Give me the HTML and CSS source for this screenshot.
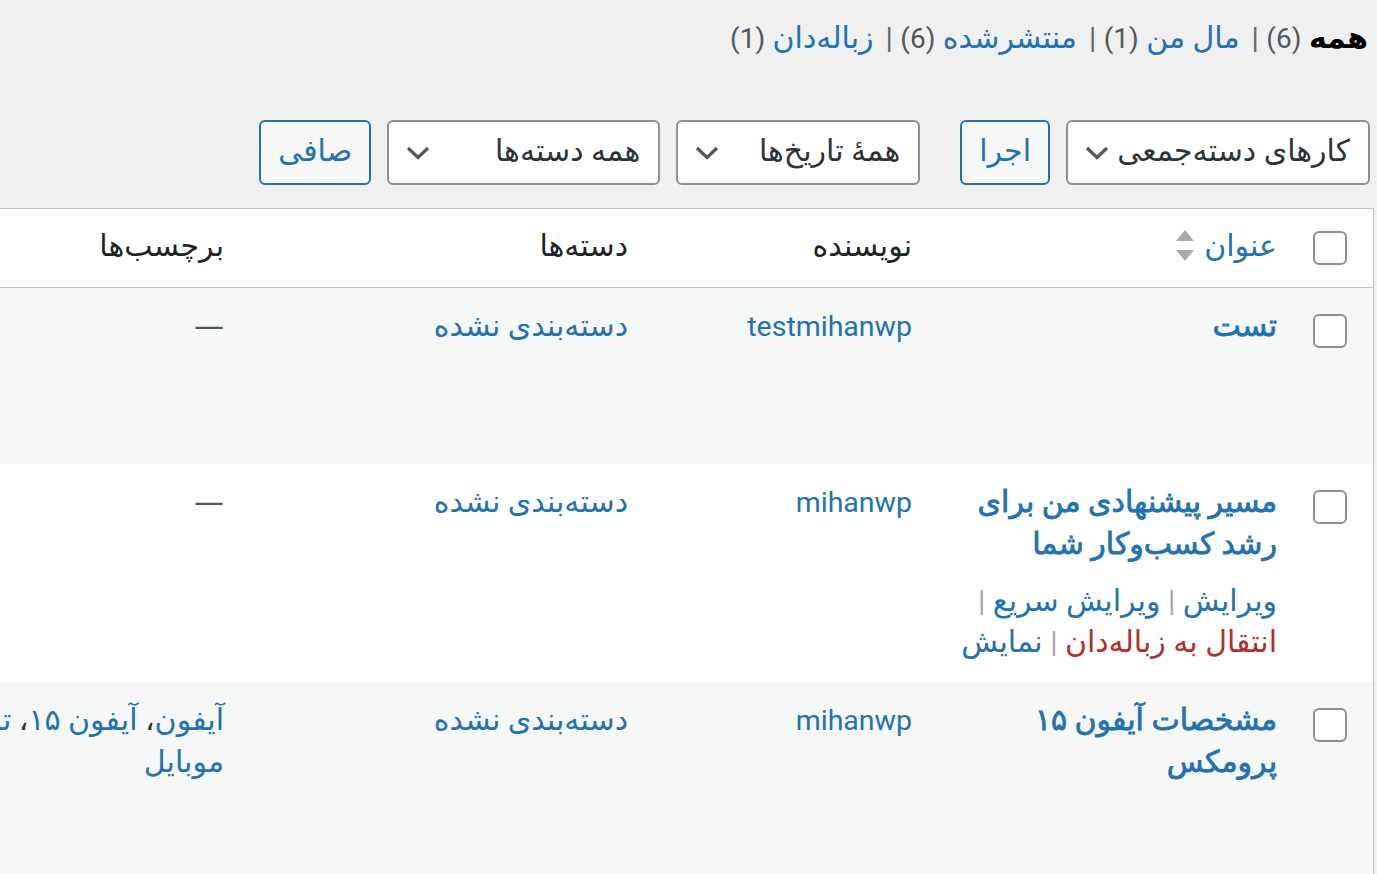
FILE: index.html
```html
<!DOCTYPE html>
<html lang="fa" dir="rtl">
<head>
    <meta charset="UTF-8">
    <meta name="viewport" content="width=device-width, initial-scale=1.0">
    <title>نوشته‌ها</title>
    <link rel="stylesheet" href="styles.css">
</head>
<body>
    <div class="wrap">
        <ul class="subsubsub">
            <li><a class="current">همه <span class="count">(6)</span></a> |</li>
            <li><a>مال من <span class="count">(1)</span></a> |</li>
            <li><a>منتشرشده <span class="count">(6)</span></a> |</li>
            <li><a>زباله&zwnj;دان <span class="count">(1)</span></a></li>
        </ul>

        <div class="tablenav">
            <div class="actions">
                <div class="select bulk">
                    <span>کارهای دسته&zwnj;جمعی</span>
                    <svg width="24" height="14" viewBox="0 0 24 14"><polyline points="2,2 12,11.5 22,2" fill="none" stroke="#50575e" stroke-width="3.2"/></svg>
                </div>
                <button class="button">اجرا</button>
            </div>
            <div class="actions">
                <div class="select dates">
                    <span>همهٔ تاریخ&zwnj;ها</span>
                    <svg width="24" height="14" viewBox="0 0 24 14"><polyline points="2,2 12,11.5 22,2" fill="none" stroke="#50575e" stroke-width="3.2"/></svg>
                </div>
                <div class="select cats">
                    <span>همه دسته&zwnj;ها</span>
                    <svg width="24" height="14" viewBox="0 0 24 14"><polyline points="2,2 12,11.5 22,2" fill="none" stroke="#50575e" stroke-width="3.2"/></svg>
                </div>
                <button class="button">صافی</button>
            </div>
        </div>

        <div class="table-clip">
            <table class="posts">
                <colgroup>
                    <col class="col-check">
                    <col class="col-title">
                    <col class="col-author">
                    <col class="col-cats">
                    <col class="col-tags">
                    <col class="col-comments">
                    <col class="col-date">
                </colgroup>
                <thead>
                    <tr>
                        <th class="check-column"><input type="checkbox"></th>
                        <th><a class="sort">عنوان <svg class="sorting" width="18" height="32" viewBox="0 0 18 32"><polygon points="9,0 18,11 0,11" fill="#a7aaad"/><polygon points="0,20 18,20 9,31" fill="#a7aaad"/></svg></a></th>
                        <th>نویسنده</th>
                        <th>دسته&zwnj;ها</th>
                        <th>برچسب&zwnj;ها</th>
                        <th>دیدگاه</th>
                        <th>تاریخ</th>
                    </tr>
                </thead>
                <tbody>
                    <tr class="alt">
                        <td class="check-column"><input type="checkbox"></td>
                        <td>
                            <a class="row-title">تست</a>
                            <div class="row-actions">
                                <span><a>ویرایش</a> |</span>
                                <span><a>ویرایش سریع</a> |</span>
                                <span><a class="trash">انتقال به زباله&zwnj;دان</a> |</span>
                                <span><a>نمایش</a></span>
                            </div>
                        </td>
                        <td><a class="latin">testmihanwp</a></td>
                        <td><a>دسته&zwnj;بندی نشده</a></td>
                        <td><span class="dash">—</span></td>
                        <td>—</td>
                        <td>منتشرشده</td>
                    </tr>
                    <tr class="hover">
                        <td class="check-column"><input type="checkbox"></td>
                        <td>
                            <a class="row-title">مسیر پیشنهادی من برای رشد کسب&zwnj;وکار شما</a>
                            <div class="row-actions">
                                <span><a>ویرایش</a> |</span>
                                <span><a>ویرایش سریع</a> |</span>
                                <span><a class="trash">انتقال به زباله&zwnj;دان</a> |</span>
                                <span><a>نمایش</a></span>
                            </div>
                        </td>
                        <td><a class="latin">mihanwp</a></td>
                        <td><a>دسته&zwnj;بندی نشده</a></td>
                        <td><span class="dash">—</span></td>
                        <td>—</td>
                        <td>منتشرشده</td>
                    </tr>
                    <tr class="alt">
                        <td class="check-column"><input type="checkbox"></td>
                        <td>
                            <a class="row-title">مشخصات آیفون ۱۵ پرومکس</a>
                            <div class="row-actions">
                                <span><a>ویرایش</a> |</span>
                                <span><a>ویرایش سریع</a> |</span>
                                <span><a class="trash">انتقال به زباله&zwnj;دان</a> |</span>
                                <span><a>نمایش</a></span>
                            </div>
                        </td>
                        <td><a class="latin">mihanwp</a></td>
                        <td><a>دسته&zwnj;بندی نشده</a></td>
                        <td><a>آیفون</a>، <a>آیفون ۱۵</a>، <a>تلفن همراه</a>، <a>موبایل</a></td>
                        <td>—</td>
                        <td>منتشرشده</td>
                    </tr>
                </tbody>
            </table>
        </div>
    </div>
</body>
</html>
```

FILE: styles.css
```css
body {
    margin: 0;
    background: #f0f0f1;
    color: #2c3338;
    font-family: Roboto, "DejaVu Sans", sans-serif;
    font-size: 30px;
    overflow: hidden;
}

a {
    color: #2271b1;
    text-decoration: none;
}

.subsubsub {
    list-style: none;
    margin: 0;
    padding: 18px 9px 0 0;
    display: flex;
    gap: 12px;
    line-height: 40px;
    color: #646970;
}

.subsubsub .current {
    color: #000;
    font-weight: 700;
}

.subsubsub .count {
    color: #50575e;
    font-weight: 400;
    font-size: 28px;
}

.tablenav {
    display: flex;
    gap: 40px;
    margin-top: 61px;
    padding-right: 7px;
}

.actions {
    display: flex;
    gap: 16px;
}

.select {
    display: flex;
    align-items: center;
    justify-content: space-between;
    box-sizing: border-box;
    height: 65px;
    padding: 0 18px 0 17px;
    background: #fff;
    border: 2px solid #8c8f94;
    border-radius: 6px;
    color: #2c3338;
}

.select span {
    margin-top: -5px;
}

.select.bulk { width: 304px; }
.select.dates { width: 244px; }
.select.cats { width: 273px; }

.button {
    height: 65px;
    padding: 0 17px 5px;
    background: #f6f7f7;
    border: 2px solid #2271b1;
    border-radius: 6px;
    color: #2271b1;
    font: inherit;
}

.table-clip {
    margin-top: 23px;
    margin-right: 3px;
    overflow: hidden;
}

.posts {
    width: 1901px;
    table-layout: fixed;
    border-collapse: separate;
    border-spacing: 0;
    background: #fff;
    border: 1px solid #c3c4c7;
}

.col-check { width: 78px; }
.col-title { width: 365px; }
.col-author { width: 284px; }
.col-cats { width: 404px; }
.col-tags { width: 420px; }
.col-comments { width: 90px; }
.col-date { width: 260px; }

.posts th,
.posts td {
    padding: 17px 18px 20px;
    line-height: 42px;
    text-align: right;
    vertical-align: top;
}

.posts th {
    padding-top: 16px;
    font-weight: 400;
    color: #1d2327;
    border-bottom: 1px solid #c3c4c7;
}

.posts .check-column {
    padding: 26px 26px 0 18px;
}

.posts th.check-column {
    vertical-align: middle;
    padding-top: 0;
    padding-bottom: 0;
}

.check-column input {
    appearance: none;
    display: block;
    width: 34px;
    height: 34px;
    margin: 0;
    background: #fff;
    border: 2px solid #8c8f94;
    border-radius: 6px;
}

.sort {
    display: inline-flex;
    align-items: center;
}

.sorting {
    margin-right: 10px;
}

.posts tr.alt td {
    background: #f6f7f7;
}

.row-title {
    font-weight: 400;
    -webkit-text-stroke: 0.8px currentColor;
}

.row-actions {
    margin-top: 15px;
    line-height: 41px;
    color: #a7aaad;
    visibility: hidden;
}

.hover .row-actions {
    visibility: visible;
}

.row-actions span {
    white-space: nowrap;
}

.row-actions .trash {
    color: #b32d2e;
}

.latin {
    font-family: Roboto, sans-serif;
    font-size: 28.5px;
}

.dash {
    font-family: "DejaVu Sans", sans-serif;
    color: #50575e;
}
```
